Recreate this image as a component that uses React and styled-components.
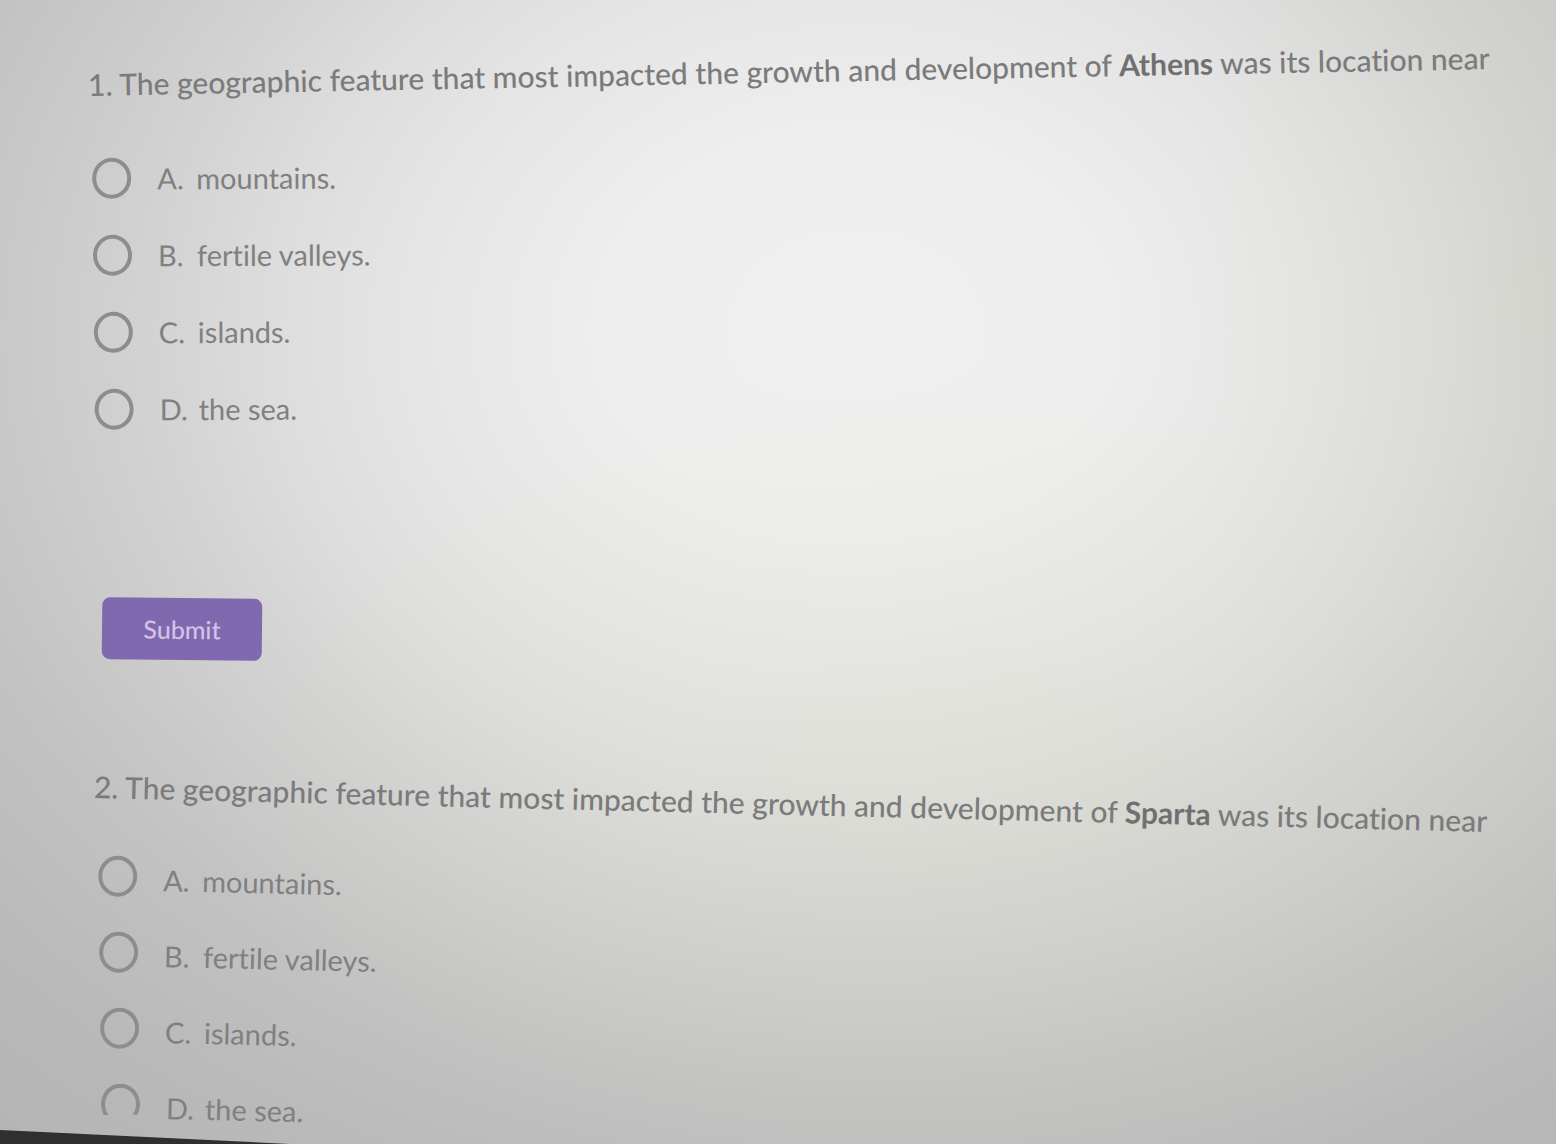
import styled, { createGlobalStyle } from "styled-components";

const GlobalStyle = createGlobalStyle`
  * {
    box-sizing: border-box;
  }

  body {
    margin: 0;
    font-family: Lato, "Liberation Sans", sans-serif;
    font-variant-ligatures: none;
    color: #7b7b7b;
  }
`;

const Page = styled.main`
  position: relative;
  min-height: 100vh;
  padding: 64px 56px 0 88px;
  overflow: hidden;
  background:
    radial-gradient(
      ellipse 22% 60% at 98% 26%,
      rgba(210, 212, 185, 0.2),
      transparent
    ),
    radial-gradient(
      ellipse 50% 36% at 62% 68%,
      rgba(222, 224, 200, 0.28),
      transparent
    ),
    radial-gradient(
      ellipse 1000px 800px at 55% 29%,
      #f0f0f0 0%,
      #eeeeee 25%,
      #e5e5e5 45%,
      #dddddd 58%,
      #d3d3d3 70%,
      #cccccc 80%,
      #c2c2c2 95%,
      #b9b9b9 115%,
      #b4b4b4 135%
    );
`;

const Question = styled.form`
  display: flex;
  flex-direction: column;
  align-items: flex-start;
  margin: 0 0 0 ${(props) => props.$indent}px;
`;

const Prompt = styled.h2`
  margin: 0 0 ${(props) => props.$gap}px;
  font-size: 30px;
  font-weight: 500;
  line-height: 40px;
  white-space: nowrap;
  transform: rotate(${(props) => props.$tilt}deg);
  transform-origin: left center;

  strong {
    font-weight: 700;
    color: #707070;
  }
`;

const Options = styled.ul`
  display: flex;
  flex-direction: column;
  gap: ${(props) => props.$gap}px;
  margin: 0;
  padding: 0 0 0 4px;
  list-style: none;
  transform: rotate(${(props) => props.$tilt}deg);
  transform-origin: left top;
`;

const Option = styled.li`
  display: flex;
  align-items: center;
  gap: 26px;
  height: 41px;
`;

const Radio = styled.input`
  appearance: none;
  width: 39px;
  height: 41px;
  margin: 0;
  border: 4px solid #8d8d8d;
  border-radius: 50%;
  clip-path: ${(props) => (props.$cut ? "inset(0 0 10px 0)" : "none")};
`;

const OptionLabel = styled.label`
  display: flex;
  padding-top: ${(props) => props.$drop}px;
  font-size: 29px;
  line-height: 36px;
  color: #808080;
  transform: rotate(${(props) => props.$tilt}deg);
  transform-origin: left center;
`;

const Letter = styled.span`
  width: 39px;
`;

const SubmitButton = styled.button`
  width: 160px;
  height: 62px;
  margin: 168px 0 106px 14px;
  border: 0;
  border-radius: 8px;
  background: #8069ae;
  color: #d3c3e6;
  font-family: inherit;
  font-size: 25px;
  font-weight: 500;
  transform: rotate(0.6deg);
`;

const ScreenEdge = styled.svg`
  position: absolute;
  left: 0;
  bottom: 0;
  width: 290px;
  height: 14px;
`;

const options = ["mountains.", "fertile valleys.", "islands.", "the sea."];

const questions = [
  {
    number: 1,
    city: "Athens",
    indent: 0,
    tilt: -1.1,
    promptGap: 54,
    listTilt: -0.6,
    labelTilt: 0.4,
    labelDrop: 0,
    optionGap: 36,
    submit: true,
  },
  {
    number: 2,
    city: "Sparta",
    indent: 6,
    tilt: 1.4,
    promptGap: 50,
    listTilt: -0.7,
    labelTilt: 2,
    labelDrop: 8,
    optionGap: 35,
  },
];

const App = () => {
  return (
    <>
      <GlobalStyle />
      <Page>
        {questions.map((q) => (
          <Question
            key={q.number}
            $indent={q.indent}
            onSubmit={(e) => e.preventDefault()}
          >
            <Prompt $tilt={q.tilt} $gap={q.promptGap}>
              {q.number}. The geographic feature that most impacted the growth
              and development of <strong>{q.city}</strong> was its location near
            </Prompt>
            <Options $gap={q.optionGap} $tilt={q.listTilt}>
              {options.map((text, i) => {
                const id = `q${q.number}-${i}`;
                return (
                  <Option key={id}>
                    <Radio
                      type="radio"
                      id={id}
                      name={`q${q.number}`}
                      $cut={!q.submit && i === options.length - 1}
                    />
                    <OptionLabel
                      htmlFor={id}
                      $tilt={q.labelTilt}
                      $drop={q.labelDrop}
                    >
                      <Letter>{"ABCD"[i]}.</Letter>
                      <span>{text}</span>
                    </OptionLabel>
                  </Option>
                );
              })}
            </Options>
            {q.submit && <SubmitButton type="submit">Submit</SubmitButton>}
          </Question>
        ))}
        <ScreenEdge viewBox="0 0 290 14" aria-hidden="true">
          <path d="M0 0 L290 14 L0 14 Z" fill="#2f2f2f" />
        </ScreenEdge>
      </Page>
    </>
  );
};

export default App;
